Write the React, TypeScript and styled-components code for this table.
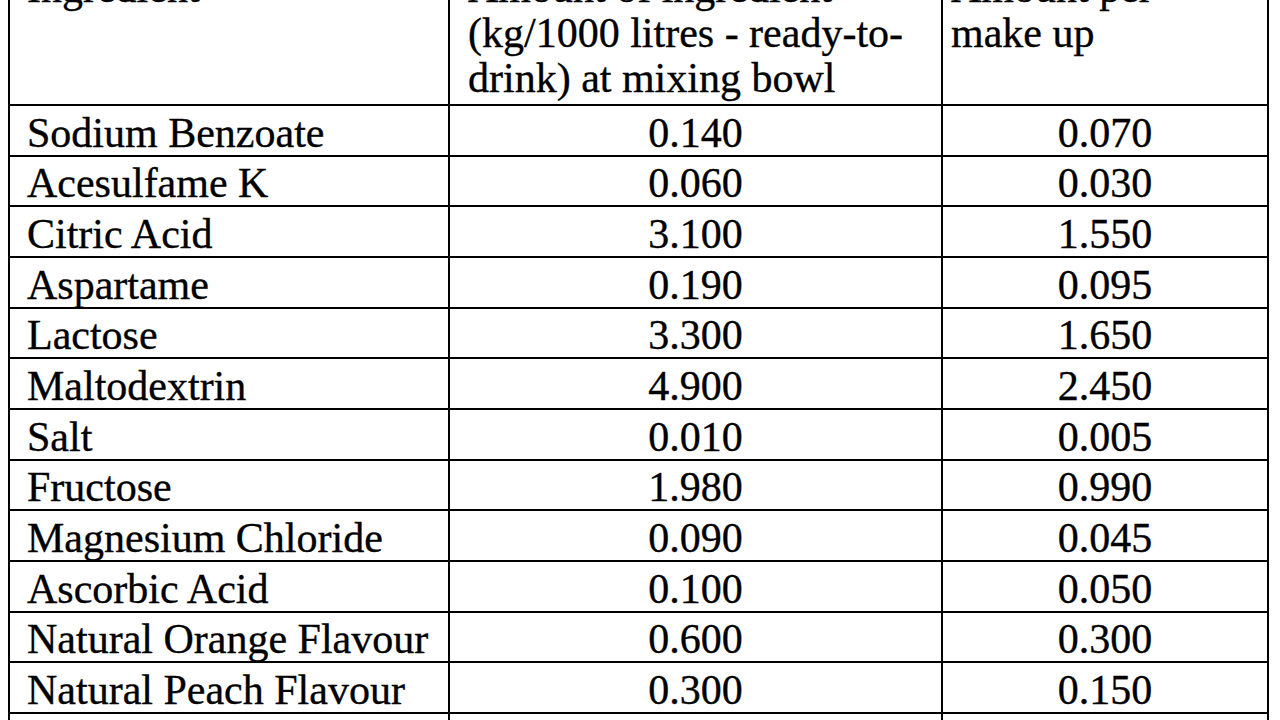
import styled, { createGlobalStyle } from "styled-components";

type Ingredient = {
  name: string;
  mixing: string;
  makeUp: string;
};

const ingredients: Ingredient[] = [
  { name: "Sodium Benzoate", mixing: "0.140", makeUp: "0.070" },
  { name: "Acesulfame K", mixing: "0.060", makeUp: "0.030" },
  { name: "Citric Acid", mixing: "3.100", makeUp: "1.550" },
  { name: "Aspartame", mixing: "0.190", makeUp: "0.095" },
  { name: "Lactose", mixing: "3.300", makeUp: "1.650" },
  { name: "Maltodextrin", mixing: "4.900", makeUp: "2.450" },
  { name: "Salt", mixing: "0.010", makeUp: "0.005" },
  { name: "Fructose", mixing: "1.980", makeUp: "0.990" },
  { name: "Magnesium Chloride", mixing: "0.090", makeUp: "0.045" },
  { name: "Ascorbic Acid", mixing: "0.100", makeUp: "0.050" },
  { name: "Natural Orange Flavour", mixing: "0.600", makeUp: "0.300" },
  { name: "Natural Peach Flavour", mixing: "0.300", makeUp: "0.150" },
];

const GlobalStyle = createGlobalStyle`
  html, body {
    margin: 0;
    padding: 0;
    background: #ffffff;
    overflow: hidden;
    height: 720px;
  }
`;

const Page = styled.div`
  width: 1280px;
  height: 720px;
  overflow: hidden;
  background: #ffffff;
  color: #000000;
  font-family: "Liberation Serif", "Times New Roman", serif;
  font-size: 42px;
  -webkit-text-stroke: 0.35px #000000;
`;

// the scan starts partway into the header row, so the table is pulled up
const Table = styled.table`
  margin: -39px 0 0 8px;
  border-collapse: collapse;
  table-layout: fixed;
  width: 1261px;
`;

type CellProps = {
  $align?: "left" | "center";
  $pad?: number;
};

const HeadCell = styled.th<CellProps>`
  border: 2px solid #000;
  padding: 3px ${(p) => (p.$pad ?? 18)}px 3px;
  text-align: left;
  vertical-align: top;
  font-weight: normal;
  line-height: 45px;
  white-space: nowrap;
`;

const Cell = styled.td<CellProps>`
  border: 2px solid #000;
  padding: 5.5px ${(p) => (p.$pad ?? 18)}px 0;
  line-height: 43.17px;
  text-align: ${(p) => p.$align ?? "left"};
  vertical-align: top;
  white-space: nowrap;
`;

const Col = styled.col<{ $width: number }>`
  width: ${(p) => p.$width}px;
`;

export default function App() {
  return (
    <Page>
      <GlobalStyle />
      <Table>
        <colgroup>
          <Col $width={440} />
          <Col $width={493} />
          <Col $width={326} />
        </colgroup>
        <thead>
          <tr>
            <HeadCell $pad={17}>Ingredient</HeadCell>
            <HeadCell>
              Amount of ingredient
              <br />
              (kg/1000 litres - ready-to-
              <br />
              drink) at mixing bowl
            </HeadCell>
            <HeadCell $pad={8}>
              Amount per
              <br />
              make up
            </HeadCell>
          </tr>
        </thead>
        <tbody>
          {ingredients.map((item) => (
            <tr key={item.name}>
              <Cell $pad={17}>{item.name}</Cell>
              <Cell $align="center">{item.mixing}</Cell>
              <Cell $align="center" $pad={8}>
                {item.makeUp}
              </Cell>
            </tr>
          ))}
          <tr>
            <Cell $pad={17}>&nbsp;</Cell>
            <Cell>&nbsp;</Cell>
            <Cell $pad={8}>&nbsp;</Cell>
          </tr>
        </tbody>
      </Table>
    </Page>
  );
}
